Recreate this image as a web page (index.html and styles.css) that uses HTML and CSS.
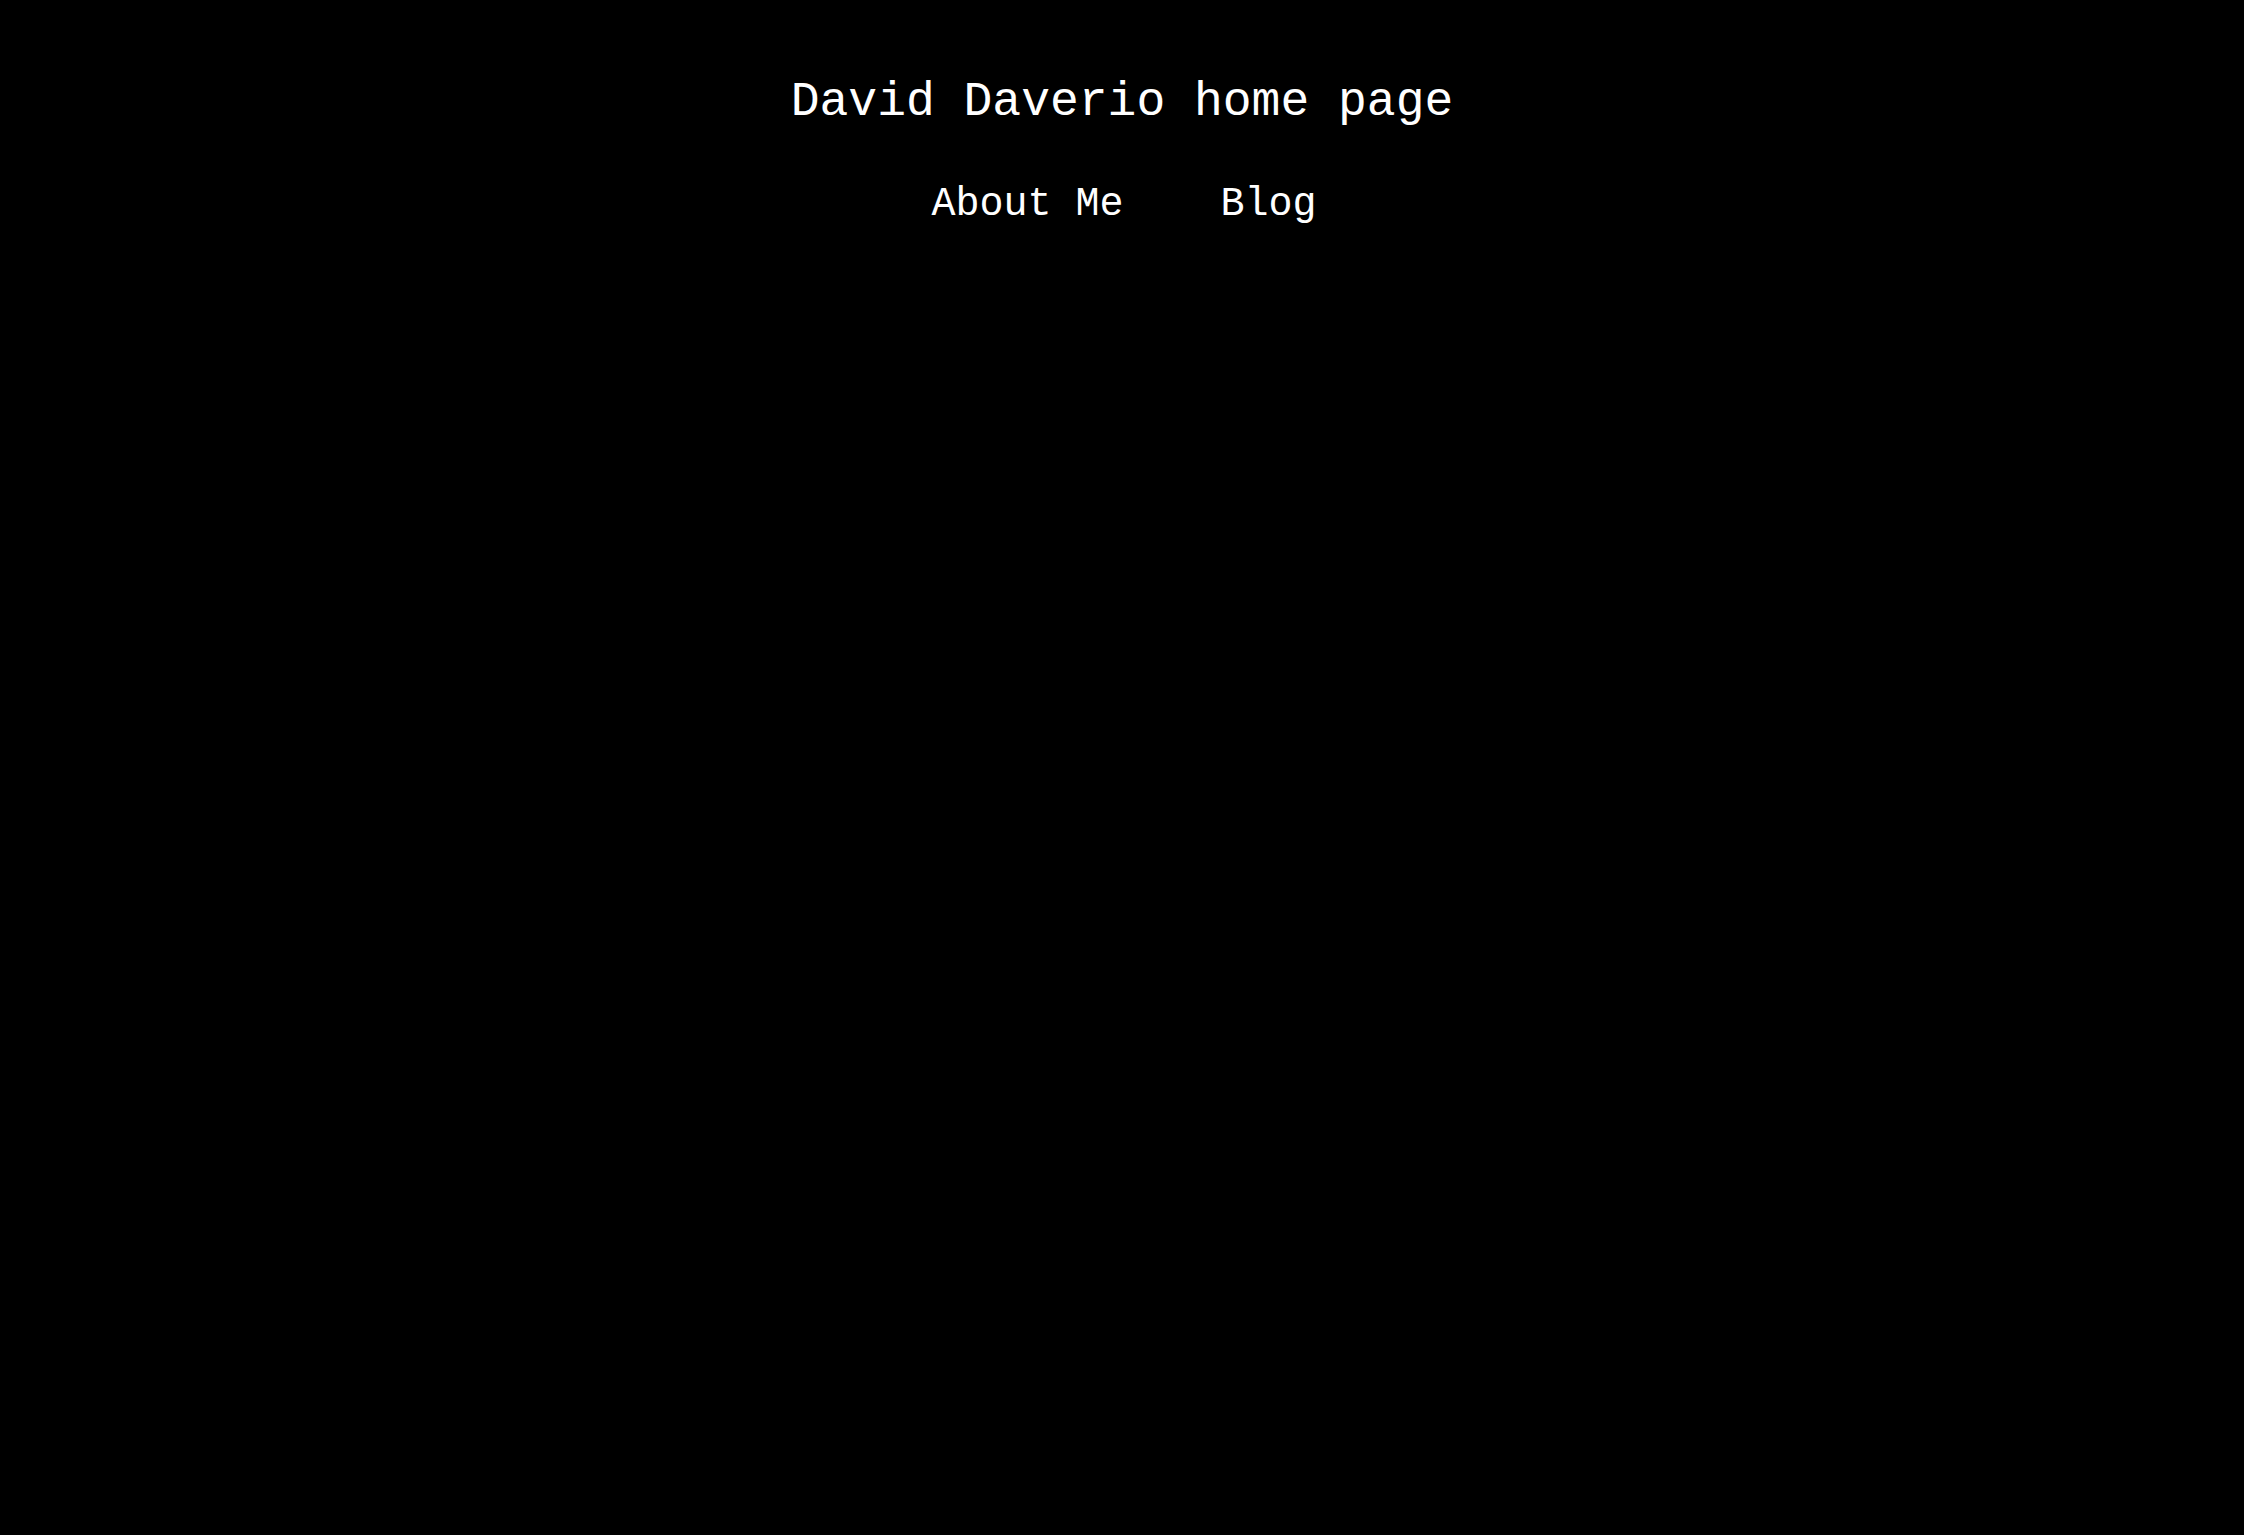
FILE: index.html
```html
<!DOCTYPE html>
<html lang="en">
<head>
<meta charset="utf-8">
<title>David Daverio home page</title>
<link rel="stylesheet" href="styles.css">
</head>
<body>
<header class="site-header">
  <h1 class="site-title">David Daverio home page</h1>
  <nav class="site-nav">
    <a class="nav-link" href="#">About Me</a>
    <a class="nav-link" href="#">Blog</a>
  </nav>
</header>
</body>
</html>
```
FILE: styles.css
```css
html, body {
  margin: 0;
  padding: 0;
  background: #000;
  color: #fff;
  min-height: 100%;
}
body {
  font-family: "Liberation Mono", "DejaVu Sans Mono", monospace;
}
.site-header {
  display: flex;
  flex-direction: column;
  align-items: center;
  padding-top: 73px;
}
.site-title {
  margin: 0;
  font-size: 48px;
  font-weight: normal;
  line-height: 58px;
}
.site-nav {
  display: flex;
  gap: 97px;
  margin-top: 50px;
  padding-left: 4px;
}
.nav-link {
  color: #fff;
  text-decoration: none;
  font-size: 40px;
  line-height: 48px;
}
```
